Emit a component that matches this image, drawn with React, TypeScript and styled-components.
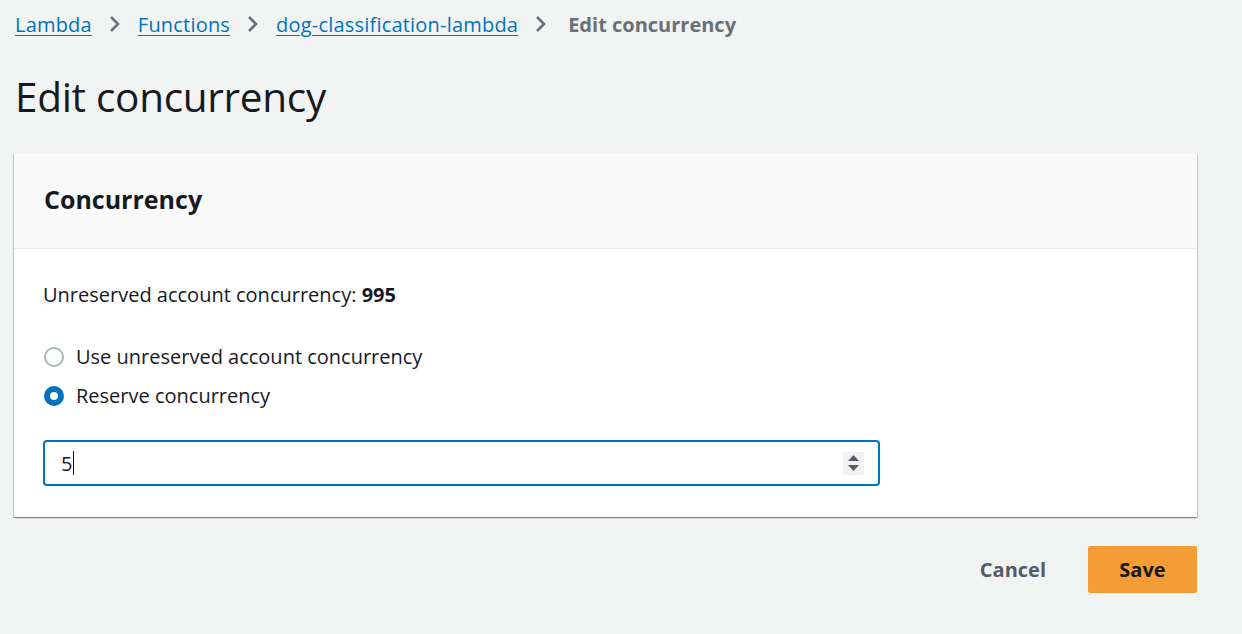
import React from "react";
import styled, { createGlobalStyle } from "styled-components";

const GlobalStyle = createGlobalStyle`
  html, body {
    margin: 0;
    padding: 0;
    background: #f2f3f3;
    font-family: "Open Sans", "Noto Sans", Arial, sans-serif;
    color: #16191f;
  }
`;

const Page = styled.div`
  padding: 9px 45px 0 15px;
`;

/* ------------------ Breadcrumbs ------------------ */
const Crumbs = styled.nav`
  display: flex;
  align-items: center;
  gap: 16px;
  height: 30px;
  font-size: 20px;
`;

const CrumbLink = styled.a`
  color: #0073bb;
  text-decoration: underline;
  text-underline-offset: 3px;
  text-decoration-thickness: 1px;
  letter-spacing: 0.2px;
`;

const CrumbCurrent = styled.span`
  color: #687078;
  font-weight: 700;
  margin-left: 4px;
`;

const Chevron = () => (
  <svg width="14" height="20" viewBox="0 0 14 20" aria-hidden>
    <path d="M3 3 L10 10 L3 17" fill="none" stroke="#687078" strokeWidth="2.6" />
  </svg>
);

const Title = styled.h1`
  margin: 33px 0 32px;
  font-size: 40.5px;
  line-height: 50px;
  font-weight: 400;
  letter-spacing: -0.3px;
`;

/* ------------------ Card ------------------ */
const Card = styled.section`
  margin-left: -1px;
  background: #fff;
  box-shadow: 0 1px 1px 0 rgba(0, 28, 36, 0.3), 1px 1px 1px 0 rgba(0, 28, 36, 0.15),
    -1px 1px 1px 0 rgba(0, 28, 36, 0.15);
`;

const CardHeader = styled.header`
  height: 95px;
  display: flex;
  align-items: center;
  padding: 0 30px 4px;
  box-sizing: border-box;
  background: #fafafa;
  border-bottom: 1px solid #eaeded;
  font-size: 25px;
  font-weight: 700;
`;

const CardBody = styled.div`
  padding: 31px 30px 31px 29px;
`;

const Line = styled.p`
  margin: 0;
  font-size: 20px;
  line-height: 30px;
`;

const RadioGroup = styled.div`
  display: flex;
  flex-direction: column;
  gap: 9px;
  margin: 32px 0 0 1px;
`;

const RadioRow = styled.label`
  display: flex;
  align-items: center;
  gap: 12px;
  font-size: 20px;
  line-height: 30px;
`;

const RadioDot = styled.span<{ checked?: boolean }>`
  width: 20px;
  height: 20px;
  box-sizing: border-box;
  border-radius: 50%;
  border: ${(p) => (p.checked ? "6px solid #0073bb" : "2px solid #aab7b8")};
  background: #fff;
`;

const Field = styled.div`
  margin-top: 29px;
  width: 837px;
  height: 46px;
  box-sizing: border-box;
  border: 2px solid #0073bb;
  border-radius: 4px;
  display: flex;
  align-items: center;
  padding: 0 14px 0 16px;
  font-size: 20px;
`;

const Value = styled.span`
  display: flex;
  align-items: center;
  flex: 1;
`;

const Caret = styled.span`
  display: inline-block;
  width: 1px;
  height: 24px;
  margin-left: 1px;
  background: #16191f;
`;

const Spinner = styled.span`
  width: 21px;
  height: 23px;
  background: #f2f2f2;
  display: flex;
  align-items: center;
  justify-content: center;
`;

/* ------------------ Footer ------------------ */
const Actions = styled.div`
  display: flex;
  justify-content: flex-end;
  align-items: center;
  gap: 42px;
  margin-top: 29px;
`;

const TextButton = styled.button`
  border: none;
  background: none;
  font: inherit;
  font-size: 20px;
  font-weight: 700;
  color: #545b64;
  padding: 0;
`;

const PrimaryButton = styled.button`
  width: 109px;
  height: 47px;
  border: none;
  border-radius: 2px;
  background: #f49d37;
  font: inherit;
  font-size: 20px;
  font-weight: 700;
  color: #16191f;
`;

const App = () => {
  return (
    <Page>
      <GlobalStyle />
      <Crumbs>
        <CrumbLink>Lambda</CrumbLink>
        <Chevron />
        <CrumbLink>Functions</CrumbLink>
        <Chevron />
        <CrumbLink>dog-classification-lambda</CrumbLink>
        <Chevron />
        <CrumbCurrent>Edit concurrency</CrumbCurrent>
      </Crumbs>
      <Title>Edit concurrency</Title>
      <Card>
        <CardHeader>Concurrency</CardHeader>
        <CardBody>
          <Line>
            Unreserved account concurrency: <b>995</b>
          </Line>
          <RadioGroup>
            <RadioRow>
              <RadioDot />
              Use unreserved account concurrency
            </RadioRow>
            <RadioRow>
              <RadioDot checked />
              Reserve concurrency
            </RadioRow>
          </RadioGroup>
          <Field>
            <Value>
              5<Caret />
            </Value>
            <Spinner>
              <svg width="13" height="18" viewBox="0 0 13 18" aria-hidden>
                <path d="M6.5 1 L12 7 L1 7 Z" fill="#545b64" />
                <path d="M1 11 L12 11 L6.5 17 Z" fill="#545b64" />
              </svg>
            </Spinner>
          </Field>
        </CardBody>
      </Card>
      <Actions>
        <TextButton>Cancel</TextButton>
        <PrimaryButton>Save</PrimaryButton>
      </Actions>
    </Page>
  );
};

export default App;
